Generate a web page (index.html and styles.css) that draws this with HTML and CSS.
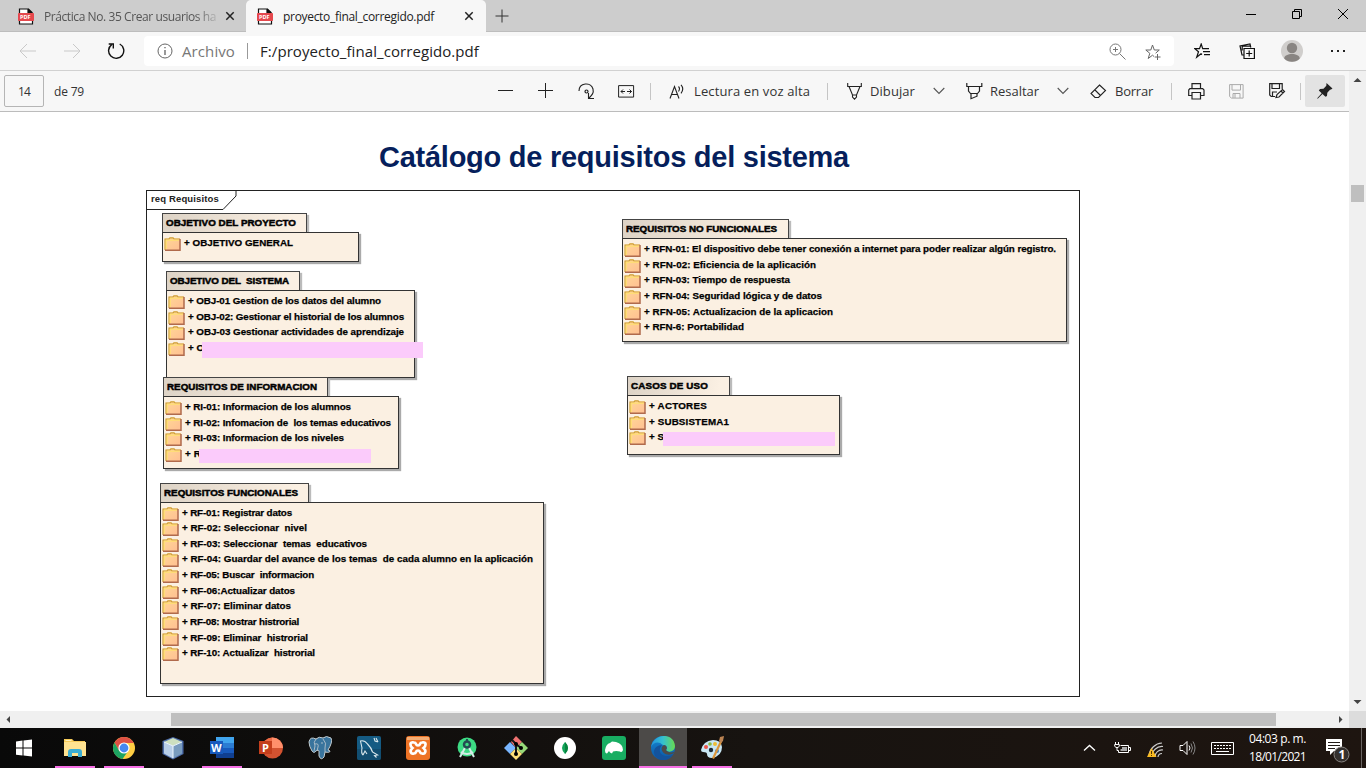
FILE: index.html
```html
<!DOCTYPE html>
<html lang="es">
<head>
<meta charset="utf-8">
<title>proyecto_final_corregido.pdf</title>
<link rel="stylesheet" href="styles.css">
</head>
<body>
<svg class="defs" aria-hidden="true">
  <defs>
    <linearGradient id="fg" x1="0" y1="0" x2="1" y2="1"><stop offset="0" stop-color="#ffd796"/><stop offset="1" stop-color="#ffbf92"/></linearGradient>
    <linearGradient id="eg" x1="0" y1="0" x2="1" y2="0"><stop offset="0" stop-color="#2293e0"/><stop offset=".5" stop-color="#35c0cf"/><stop offset="1" stop-color="#68db4f"/></linearGradient>
    <linearGradient id="eb" x1="0" y1="0" x2="0" y2="1"><stop offset="0" stop-color="#1587d4"/><stop offset="1" stop-color="#0c57a4"/></linearGradient>
  </defs>
  <symbol id="folder" viewBox="0 0 17 16"><path d="M1 14V2.500h3.500l1-1h4l1 1H16V14z" fill="url(#fg)"/><path d="M1 14V3h4l1-1.200h3L10 3h6" fill="none" stroke="#cda038" stroke-width="1.200"/><path d="M2.200 13V4.200H15" fill="none" stroke="#ffe46c"/><path d="M16 3v11.300H1" fill="none" stroke="#b06a4c" stroke-width="1.500"/></symbol>
  <symbol id="x" viewBox="0 0 10 10"><path d="m1.300 1.300 7.400 7.400m0-7.400-7.400 7.400" stroke="#222" stroke-width="1.500"/></symbol>
  <symbol id="chev" viewBox="0 0 12 8"><path d="m.7 1 5.300 5.400L11.300 1" fill="none" stroke="#555" stroke-width="1.100"/></symbol>
</svg>

<header class="tabs">
  <div class="tab idle"><svg class="pdf-icon" viewBox="0 0 16 17"><path d="M1.500 5V1h9l4 4M1.500 12v4h13v-4M10 1v4h4.500" fill="#fff" stroke="#111" stroke-width="1.200"/><path d="M10 .5 15 5.500h-5z" fill="#111"/><rect y="5" width="16" height="8" rx=".7" fill="#e5484d"/><text x="2" y="11.200" class="pdf-text">PDF</text></svg><span class="tab-title fade" data-w="172">Práctica No. 35 Crear usuarios ha</span><svg class="close"><use href="#x"/></svg></div>
  <div class="tab active"><svg class="pdf-icon" viewBox="0 0 16 17"><path d="M1.500 5V1h9l4 4M1.500 12v4h13v-4M10 1v4h4.500" fill="#fff" stroke="#111" stroke-width="1.200"/><path d="M10 .5 15 5.500h-5z" fill="#111"/><rect y="5" width="16" height="8" rx=".7" fill="#e5484d"/><text x="2" y="11.200" class="pdf-text">PDF</text></svg><span class="tab-title" data-w="151">proyecto_final_corregido.pdf</span><svg class="close"><use href="#x"/></svg></div>
  <svg class="new-tab" viewBox="0 0 14 14"><path d="M7 .5v13M.5 7h13" stroke="#333"/></svg>
  <div class="window-buttons">
    <svg width="12" height="12"><path d="M1 6.500h10" stroke="#000"/></svg>
    <svg width="12" height="12"><path d="M1.500 3.500h7v7h-7zM3.500 3V1.500h7v7H9" fill="none" stroke="#000"/></svg>
    <svg width="12" height="12"><path d="m1 1 10 10M11 1 1 11" stroke="#000"/></svg>
  </div>
</header>

<nav class="address-row">
  <svg class="nav-icon back" viewBox="0 0 18 16"><path d="M17 8H1.500M8 1 1 8l7 7" fill="none" stroke="#c9c9c9"/></svg>
  <svg class="nav-icon forward" viewBox="0 0 18 16"><path d="M1 8h15.500M10 1l7 7-7 7" fill="none" stroke="#c9c9c9"/></svg>
  <svg class="nav-icon reload" viewBox="0 0 18 18"><path d="M12.700 2A7.600 7.600 0 1 1 4.700 2.600M1.700 2h4.600v4.600" fill="none" stroke="#111" stroke-width="1.400"/></svg>
  <div class="address">
    <svg class="info" viewBox="0 0 16 16"><circle cx="8" cy="8" r="7" fill="none" stroke="#666"/><path d="M8 7v5M8 4v1.300" stroke="#555" stroke-width="1.200"/></svg>
    <span class="scheme" data-w="53">Archivo</span><i class="address-line"></i><span class="url" data-w="219">F:/proyecto_final_corregido.pdf</span>
    <svg class="zoom-icon" viewBox="0 0 17 17"><circle cx="6.500" cy="6.500" r="5.500" fill="none" stroke="#777"/><path d="m10.500 10.500 6 6M4 6.500h5M6.500 4v5" stroke="#777"/></svg>
    <svg class="star" viewBox="0 0 17 17"><path d="M9 12.500 7.500 11.200 3.200 14.500l1.600-5.200L.8 6h5L7.500 1l1.800 5h5l-3.700 3.200M12.500 10v6M9.700 13h5.800" fill="none" stroke="#666"/></svg>
  </div>
  <svg class="favorites" viewBox="0 0 17 16"><path d="m8 11.500-1-.8-4.300 3.500 1.800-5.400L.8 5.700h4.700L7.200 1l1.500 4.700H15M9 8.700h7M10 11.700h6" fill="none" stroke="#111" stroke-width="1.200"/></svg>
  <svg class="collections" viewBox="0 0 17 17"><path d="M5 5.500h10.400V15.500H5zM10.200 7.500v6M7.200 10.500h6M4.500 12H3L1 3l10-2 .8 3.500M3.200 7.500V3.200H11" fill="none" stroke="#111" stroke-width="1.200"/></svg>
  <svg class="avatar" viewBox="0 0 22 22"><circle cx="11" cy="11" r="11" fill="#d0cecc"/><circle cx="11" cy="8" r="5.200" fill="#898582"/><path d="M3.200 18.500c0-6 15.600-6 15.600 0a11 11 0 0 1-15.600 0" fill="#898582"/></svg>
  <svg class="dots" viewBox="0 0 16 4"><path d="M1 1h2v2H1zM7 1h2v2H7zM13 1h2v2h-2z" fill="#222"/></svg>
</nav>

<main class="viewer">
  <div class="document">
    <div class="toolbar">
      <div class="page-box"><span data-w="12">14</span></div><span class="page-total" data-w="30">de 79</span>
      <svg class="minus" width="16" height="16"><path d="M0 7.500h15" stroke="#222"/></svg>
      <svg class="plus" width="16" height="16"><path d="M0 7.500h15M7.500 0v15" stroke="#222"/></svg>
      <svg class="rotate" width="17" height="17"><path d="M1 8C1-.5 13-1.500 15 6c1 4-1 6-4 9M10.500 10v5.500H16" fill="none" stroke="#222" stroke-width="1.100"/><circle cx="8.500" cy="8.500" r="1.500" fill="none" stroke="#222" stroke-width="1.200"/></svg>
      <svg class="fit" width="17" height="13"><path d="M.6.600h15v11.500H.6zM3 6.500h4M9 6.500h4.500M5 4.500l-2 2 2 2M11.500 4.500l2 2-2 2" fill="none" stroke="#222"/></svg>
      <i class="sep s1"></i>
      <svg class="aloud" width="17" height="15"><path d="m1 14.500 4.500-12 4.500 12M2.800 10.500h5.500M9.500 2.500q2 2 0 5M12 .8q3.500 4 0 8.500" fill="none" stroke="#222" stroke-width="1.100"/></svg>
      <span data-w="116">Lectura en voz alta</span>
      <i class="sep s2"></i>
      <svg class="draw" width="15" height="17"><path d="M.7 0v3.500h13.600V0M2 3.500l3.500 8.500h4L13 3.500M5.500 12v2l2 2.200 2-2.200v-2" fill="none" stroke="#222" stroke-width="1.100"/></svg>
      <span data-w="45">Dibujar</span><svg class="chev c1"><use href="#chev"/></svg>
      <svg class="mark" width="17" height="17"><path d="M.8 0v3.500h15V0M2.500 3.500V8l2 2.500h7l2-2.500V3.500M5 10.500v5.200l6-2.500v-2.700" fill="none" stroke="#222" stroke-width="1.200"/></svg>
      <span data-w="49">Resaltar</span><svg class="chev c2"><use href="#chev"/></svg>
      <svg class="erase" width="17" height="15"><path d="m9.500 1 6 5.500-7 7H5l-4-4zM4.500 5.500l6 6" fill="none" stroke="#222" stroke-width="1.100"/></svg>
      <span data-w="38">Borrar</span>
      <i class="sep s3"></i>
      <svg class="print" width="17" height="17"><path d="M4 5.500V.600h8.500v4.900M4 12.500H.700V7l1.200-1.400h12.800L16 7v5.500h-3.500M4 9.500h8.500V16H4z" fill="none" stroke="#222" stroke-width="1.200"/></svg>
      <svg class="save" width="15" height="15"><path d="M.6.600h13.500v13.500H2.500L.6 12.500zM3 .6v5.500h8.500V.600M4 14V9.500h7V14M6 10v4" fill="none" stroke="#aaa"/></svg>
      <svg class="save-as" width="17" height="16"><path d="M6 13.500H2.200L.7 12V.700h12.500V6M3 .700v4.800h7.500V.700M3.500 13.500V9H8M7 14.500l1-3 5.500-5 2 2L10 14zM12 8l2 2" fill="none" stroke="#222" stroke-width="1.200"/></svg>
      <i class="sep s4"></i>
      <div class="pin"><svg width="16" height="16"><path d="m9.500 0 6 5.500-1.500 1-1 .2-2.700 3-.3 3.200-1.500.8-3-2.800L.700 15.700l-.500-.5L4.700 10.300 1.800 7.500l1.200-1.400 3.500-.3 2.800-3z" fill="#222"/></svg></div>
    </div>
    <div class="page">
      <h1 data-w="470">Catálogo de requisitos del sistema</h1>
      <section class="frame">
        <svg class="frame-tag" width="92" height="20"><path d="M0 18.500h76L89 5V0" fill="#fff" stroke="#222"/></svg>
        <span class="frame-name" data-w="68">req Requisitos</span>

        <article class="package p1"><h2><span data-w="130">OBJETIVO DEL PROYECTO</span></h2>
          <ul><li><svg><use href="#folder"/></svg><span data-w="109">+ OBJETIVO GENERAL</span></li></ul></article>

        <article class="package p2"><h2><span data-w="119">OBJETIVO DEL&nbsp; SISTEMA</span></h2>
          <ul><li><svg><use href="#folder"/></svg><span data-w="193">+ OBJ-01 Gestion de los datos del alumno</span></li>
          <li><svg><use href="#folder"/></svg><span data-w="216">+ OBJ-02: Gestionar el historial de los alumnos</span></li>
          <li><svg><use href="#folder"/></svg><span data-w="216">+ OBJ-03 Gestionar actividades de aprendizaje</span></li>
          <li><svg><use href="#folder"/></svg><span data-w="16">+ O</span></li></ul><i class="redaction"></i></article>

        <article class="package p3"><h2><span data-w="150">REQUISITOS DE INFORMACION</span></h2>
          <ul><li><svg><use href="#folder"/></svg><span data-w="166">+ RI-01: Informacion de los alumnos</span></li>
          <li><svg><use href="#folder"/></svg><span data-w="206">+ RI-02: Infomacion de&nbsp; los temas educativos</span></li>
          <li><svg><use href="#folder"/></svg><span data-w="159">+ RI-03: Informacion de los niveles</span></li>
          <li><svg><use href="#folder"/></svg><span data-w="16">+ R</span></li></ul><i class="redaction"></i></article>

        <article class="package p4"><h2><span data-w="134">REQUISITOS FUNCIONALES</span></h2>
          <ul><li><svg><use href="#folder"/></svg><span data-w="110">+ RF-01: Registrar datos</span></li>
          <li><svg><use href="#folder"/></svg><span data-w="125">+ RF-02: Seleccionar&nbsp; nivel</span></li>
          <li><svg><use href="#folder"/></svg><span data-w="185">+ RF-03: Seleccionar&nbsp; temas&nbsp; educativos</span></li>
          <li><svg><use href="#folder"/></svg><span data-w="351">+ RF-04: Guardar del avance de los temas&nbsp; de cada alumno en la aplicación</span></li>
          <li><svg><use href="#folder"/></svg><span data-w="132">+ RF-05: Buscar&nbsp; informacion</span></li>
          <li><svg><use href="#folder"/></svg><span data-w="113">+ RF-06:Actualizar datos</span></li>
          <li><svg><use href="#folder"/></svg><span data-w="109">+ RF-07: Eliminar datos</span></li>
          <li><svg><use href="#folder"/></svg><span data-w="117">+ RF-08: Mostrar histrorial</span></li>
          <li><svg><use href="#folder"/></svg><span data-w="126">+ RF-09: Eliminar&nbsp; histrorial</span></li>
          <li><svg><use href="#folder"/></svg><span data-w="133">+ RF-10: Actualizar&nbsp; histrorial</span></li></ul></article>

        <article class="package p5"><h2><span data-w="151">REQUISITOS NO FUNCIONALES</span></h2>
          <ul><li><svg><use href="#folder"/></svg><span data-w="412">+ RFN-01: El dispositivo debe tener conexión a internet para poder realizar algún registro.</span></li>
          <li><svg><use href="#folder"/></svg><span data-w="172">+ RFN-02: Eficiencia de la aplicación</span></li>
          <li><svg><use href="#folder"/></svg><span data-w="146">+ RFN-03: Tiempo de respuesta</span></li>
          <li><svg><use href="#folder"/></svg><span data-w="178">+ RFN-04: Seguridad lógica y de datos</span></li>
          <li><svg><use href="#folder"/></svg><span data-w="189">+ RFN-05: Actualizacion de la aplicacion</span></li>
          <li><svg><use href="#folder"/></svg><span data-w="100">+ RFN-6: Portabilidad</span></li></ul></article>

        <article class="package p6"><h2><span data-w="77">CASOS DE USO</span></h2>
          <ul><li><svg><use href="#folder"/></svg><span data-w="58">+ ACTORES</span></li>
          <li><svg><use href="#folder"/></svg><span data-w="80">+ SUBSISTEMA1</span></li>
          <li><svg><use href="#folder"/></svg><span data-w="15">+ S</span></li></ul><i class="redaction"></i></article>
      </section>
    </div>
    <div class="hscroll"><svg width="17" height="17"><path d="M10 5v7L6.500 8.500z" fill="#444"/></svg><i class="hthumb"></i><svg class="right-arrow" width="17" height="17"><path d="M7 5v7l3.500-3.500z" fill="#444"/></svg></div>
  </div>
  <div class="vscroll"><svg width="17" height="17"><path d="M4.500 11h8L8.500 7z" fill="#444"/></svg><i class="vthumb"></i><svg class="down-arrow" width="17" height="17"><path d="M4.500 6h8l-4 4z" fill="#444"/></svg><i class="corner"></i></div>
</main>

<footer class="taskbar">
  <div class="app start"><svg viewBox="0 0 24 24"><path d="M4 5.500 10.500 4.600V11.500H4zM11.500 4.500 20 3.500v8h-8.500zM4 12.500h6.500v7L4 18.700zM11.500 12.500H20v8l-8.500-1z" fill="#fff"/></svg></div>
  <div class="app open"><svg viewBox="0 0 24 24"><path d="M1 3h8l2 2h11v15H1z" fill="#f6cb59"/><path d="M1 6h22v14H1z" fill="#ffe391"/><path d="M5 21v-5q0-3 3-3h8q3 0 3 3v5h-4v-4H9v4z" fill="#3badd3"/><path d="M2.500 4.500h6" stroke="#fff2c0"/></svg></div>
  <div class="app open"><svg viewBox="0 0 24 24"><circle cx="12" cy="12" r="11" fill="#ffce43"/><path d="M2.500 6.500A11 11 0 0 1 21.500 6.500L22 7H12l-5 7.500z" fill="#de5145"/><path d="M2.500 6.500A11 11 0 0 0 10.500 23l6-8.500H7z" fill="#1da462"/><circle cx="12" cy="12" r="5.600" fill="#fff"/><circle cx="12" cy="12" r="4.400" fill="#4688f1"/></svg></div>
  <div class="app"><svg viewBox="0 0 24 24"><path d="M12 1 22.500 5v13L12 23.500 1.500 18V5z" fill="#4d6ca8"/><path d="m12 2 9 4-9 4-9-4z" fill="#cde0c0"/><path d="M3 6v11.500l9 5V10z" fill="#b9cfe8"/><path d="m21 6-9 4v12.500l9-5z" fill="#799cbe"/><path d="M3 6l9 4 9-4M12 10v12" fill="none" stroke="#edf6ff"/></svg></div>
  <div class="app open"><svg viewBox="0 0 24 24"><path d="M6 1h18v6H6z" fill="#41a5ee"/><path d="M6 7h18v5H6z" fill="#2b7cd3"/><path d="M6 12h18v5H6z" fill="#185abd"/><path d="M6 17h18v5H6z" fill="#103f91"/><path d="M0 5h13v13H0z" fill="#185abd"/><text x="1" y="15.500" class="office-letter">W</text></svg></div>
  <div class="app"><svg viewBox="0 0 24 24"><circle cx="13.500" cy="12" r="10.500" fill="#d35230"/><path d="M13 1.500V12h11A10.500 10.500 0 0 0 13 1.500" fill="#ff8f6b"/><path d="M3 12h10V1.500A10.500 10.500 0 0 0 3 12" fill="#ed6c47"/><path d="M0 5h13v13H0z" fill="#c43e1c"/><text x="3" y="15.500" class="office-letter">P</text></svg></div>
  <div class="app"><svg viewBox="0 0 24 24"><path d="M8 3Q2 0 1 6q0 4 3 9 2 3 4 0c1-1 3-1 3 0v5q2 5 5 1l1-5q5 1 5-1l-2-1q5-8 3-12-5-3-8 0-4-2-7 1" fill="#39749d" stroke="#c4ccd0"/><path d="M8 3Q5 6 7 10l-1 5M15 3q4 4 2 9v4M7 8q4-1 3 3l-1 4M13 7h2" fill="none" stroke="#c4ccd0" stroke-width=".8"/></svg></div>
  <div class="app"><svg viewBox="0 0 24 24"><rect width="24" height="24" rx="2" fill="#155b83"/><path d="M0 13h24v9q0 2-2 2H2q-2 0-2-2z" fill="#104666" opacity=".6"/><path d="M6 19Q4 17 5 12L3.500 5q4-1 7 3 4 4 5 8l5 3-3 .5 2 2M6 19l2-4 2 3M17 2l1 3 3 1M19 2l2 4" fill="none" stroke="#dce9ed" stroke-width="1.100"/></svg></div>
  <div class="app"><svg viewBox="0 0 24 24"><rect width="24" height="24" rx="3" fill="#ee7325"/><path d="M1 1h22v3H1z" fill="#f3ad75"/><path d="M8 6.500C3 5.500 4 10 6.500 12 3 15 5 18.500 8 17.500c3 0 1-3 4-3s1 3 4 3c3 1 5-2.500 1.500-5.500C20 10 21 5.500 16 6.500c-3 0-1 3-4 3s-1-3-4-3z" fill="none" stroke="#fff" stroke-width="2.700"/></svg></div>
  <div class="app"><svg viewBox="0 0 24 24"><circle cx="12" cy="11" r="9.500" fill="#3ddc84"/><path d="M11 10 5 21M13 10l6 11M6 16q6 4 12 0" fill="none" stroke="#d6ece7" stroke-width="2"/><circle cx="12" cy="8.500" r="3" fill="#3ddc84" stroke="#244b53" stroke-width="2.500"/><path d="M12 3v3" stroke="#244b53" stroke-width="2"/></svg></div>
  <div class="app"><svg viewBox="0 0 24 24"><path d="m12 0 6 6-6 6-5-6z" fill="#f07371"/><path d="m6 6 6 6-6 6-6-6z" fill="#79b6ff"/><path d="m18 6 6 6-6 6-6-6z" fill="#98d979"/><path d="m12 12 6 6-6 6-6-6z" fill="#ffe077"/><path d="m8 4 4 4v10M12 8l5 4" fill="none" stroke="#171717" stroke-width="2"/><circle cx="12" cy="8" r="2"/><circle cx="17" cy="12" r="2"/><circle cx="12" cy="18" r="2"/></svg></div>
  <div class="app"><svg viewBox="0 0 24 24"><circle cx="12" cy="12" r="11" fill="#fff"/><path d="M12 6q6 6 0 12-6-6 0-12" fill="#13a45b"/><path d="M12 6q6 6 0 12z" fill="#07843e"/></svg></div>
  <div class="app"><svg viewBox="0 0 24 24"><rect width="24" height="24" rx="3" fill="#18ad62"/><path d="M3 14q1-6 5-7l2-1.500 4 .5q7 2 7 8-1 3-3 1.500-4-1-7 0l-1 2-2-1-1-1.500-2 2.500q-2 0-2-3.500" fill="#fff"/></svg></div>
  <div class="app open selected"><svg viewBox="0 0 24 24"><circle cx="12" cy="12" r="12" fill="url(#eb)"/><path d="M0 11C3-3 23-4 24 10c0 6-7 7-9 4 2-2 1-5-3-5C7 4 2 7 0 11" fill="url(#eg)"/><path d="M11 9c-5 6-1 12 6 11 2 0 4-1 5-2-3 7-12 8-17 3-5-6 0-12 6-12" fill="#14539c"/><path d="M13 9c-4 2-3 8 3 9.500 3 .5 6-.5 7-1.500v-1c-3 1-7 0-8-2 2-2 0-5-2-5" fill="#4c4b49"/></svg></div>
  <div class="app open"><svg viewBox="0 0 24 24"><path d="M1 14Q3 5 13 4q8 0 9 7 0 9-10 11-5 0-5-4 0-2-4-2-2 0-2-2" fill="#c9e7f4"/><circle cx="6" cy="11" r="2" fill="#ee5548"/><circle cx="10" cy="8" r="1.800" fill="#89b944"/><circle cx="15" cy="8" r="2" fill="#efbd34"/><circle cx="11" cy="14" r="2.200" fill="#1c2935"/><circle cx="17" cy="15" r="2" fill="#4183c4"/><path d="m12 22 8-17 2 1-8 17z" fill="#dc963b"/><path d="m19 5 1-4 4-1-1 5-2 2z" fill="#bc8453"/></svg></div>
  <div class="tray">
    <svg class="up" width="13" height="8"><path d="m1 6.500 5.500-5L12 6.500" fill="none" stroke="#fff" stroke-width="1.300"/></svg>
    <svg class="battery" width="17" height="13"><path d="M6.500 3.500h8v7h-10V8.500M15 5.500h1.500v3H15M1.500 0v2M4.500 0v2M3 5v3.500h1.500" fill="none" stroke="#fff"/><path d="M8 5h5v4H6.500V7H8z" fill="#aaa"/><path d="M.7 2.500h4.600V4L4.200 5.500H1.800L.7 4z" fill="none" stroke="#fff"/></svg>
    <svg class="wifi" width="17" height="16"><path d="M5 15A10 10 0 0 1 16 4.500M8 15A7 7 0 0 1 16 8M11 15a4 4 0 0 1 4-3.500M2 13A14 14 0 0 1 15 1" fill="none" stroke="#ccc" stroke-width="1.200"/><path d="m4.500 6 5 9H0z" fill="#f9bb22"/><path d="M4.500 9v3M4.500 13v1" stroke="#553600"/></svg>
    <svg class="sound" width="17" height="14"><path d="M1 4.500h3l4-4v13l-4-4H1zM10 4.500q2 2.500 0 5" fill="none" stroke="#fff"/><path d="M12 2.500q3 4.500 0 9M14 .500q4 6.500 0 13" fill="none" stroke="#888"/></svg>
    <svg class="keyboard" width="23" height="13"><path d="M.5.500h22v12H.5z" fill="none" stroke="#fff"/><path d="M3 3.500h17M3 6.500h17" stroke="#fff" stroke-dasharray="2 1"/><path d="M5 9.500h13" stroke="#fff"/></svg>
    <div class="clock"><span data-w="57">04:03 p. m.</span><span data-w="57">18/01/2021</span></div>
    <svg class="notice" width="25" height="27"><path d="M1 2h16v12H9l-4 4v-4H1z" fill="#fff"/><path d="M3 5.500h12M3 8.500h12M3 11.500h7" stroke="#211b18"/><circle cx="16.500" cy="17.500" r="7.500" fill="#34302e" stroke="#878380"/><text x="13.500" y="22" class="badge-number">1</text></svg>
    <i class="desktop-edge"></i>
  </div>
</footer>
<script src="script.js"></script>
</body>
</html>
```
FILE: styles.css
```css
* { box-sizing: border-box; }
body { margin: 0; width: 1366px; height: 768px; overflow: hidden; display: flex; flex-direction: column; font-family: "Open Sans", sans-serif; background: #fff; color: #222; }
svg { display: block; flex: none; }
i { display: block; flex: none; }
.defs { position: absolute; width: 0; height: 0; }
[data-w] { display: block; white-space: pre; flex: none; }

.tabs { height: 32px; flex: none; display: flex; background: #cdcdcd; border-bottom: 1px solid #bdbdbd; }
.tab { height: 32px; display: flex; align-items: center; font-size: 12px; }
.tab.idle { width: 246px; padding-left: 18px; color: #555; }
.tab.active { width: 240px; padding-left: 11px; background: #f7f7f7; color: #222; border-radius: 5px 5px 0 0; }
.pdf-icon { width: 16px; height: 17px; margin-right: 10px; }
.pdf-text { font: bold 5.5px "Open Sans", sans-serif; fill: #fff; }
.tab-title { width: 172px; }
.active .tab-title { width: 176px; }
.fade { -webkit-mask-image: linear-gradient(90deg, #000 88%, rgba(0, 0, 0, .2)); mask-image: linear-gradient(90deg, #000 88%, rgba(0, 0, 0, .2)); }
.close { width: 10px; height: 10px; margin-left: 9px; }
.active .close { margin-left: 5px; }
.new-tab { width: 14px; height: 14px; margin: 9px 0 0 9px; }
.window-buttons { margin-left: auto; display: flex; gap: 34px; padding: 8px 17px 0 0; }

.address-row { height: 39px; flex: none; display: flex; align-items: center; background: #f7f7f7; border-bottom: 1px solid #d1d1d1; }
.nav-icon { width: 18px; height: 16px; }
.back { margin-left: 19px; }
.forward { margin-left: 26px; }
.reload { height: 18px; margin-left: 26px; }
.address { width: 1030px; height: 30px; margin-left: 19px; background: #fff; border-radius: 4px; display: flex; align-items: center; font-size: 15px; }
.info { width: 16px; height: 16px; margin-left: 13px; }
.scheme { width: 54px; margin-left: 9px; color: #777; }
.address-line { width: 1px; height: 16px; background: #999; margin-left: 11px; }
.url { margin-left: 12px; }
.zoom-icon { width: 17px; height: 17px; margin-left: auto; }
.star { width: 17px; height: 17px; margin: 2px 12px 0 19px; }
.favorites { width: 17px; height: 16px; margin-left: 20px; }
.collections { width: 17px; height: 17px; margin-left: 28px; }
.avatar { width: 22px; height: 22px; margin-left: 25px; }
.dots { width: 16px; height: 4px; margin-left: 27px; }

.viewer { height: 657px; flex: none; display: flex; }
.document { width: 1349px; display: flex; flex-direction: column; }
.toolbar { height: 41px; flex: none; background: #f7f7f7; border-bottom: 1px solid #bcbcbc; display: flex; align-items: center; font-size: 13px; color: #333; }
.page-box { width: 40px; height: 32px; border: 1px solid #b5b5b5; border-radius: 2px; margin-left: 4px; padding-left: 13px; display: flex; align-items: center; font-size: 12px; }
.page-total { width: 31px; margin-left: 10px; font-size: 12px; }
.minus { margin-left: 413px; }
.plus { margin-left: 24px; }
.rotate { margin-left: 24px; }
.fit { margin-left: 23px; }
.sep { width: 1px; height: 17px; background: #c5c5c5; }
.s1 { margin-left: 15px; }
.aloud { margin: 0 8px 0 18px; }
.s2 { margin-left: 17px; }
.draw { margin: 0 8px 0 19px; }
.chev { width: 12px; height: 8px; }
.c1 { margin-left: 18px; }
.mark { margin: 0 7px 0 21px; }
.c2 { margin-left: 18px; }
.erase { margin: 0 8px 0 21px; }
.s3 { margin-left: 18px; }
.print { margin-left: 16px; }
.save { margin-left: 24px; }
.save-as { margin-left: 25px; }
.s4 { margin-left: 14px; }
.pin { width: 40px; height: 32px; margin-left: 4px; background: #e3e3e3; border-radius: 2px; padding: 8px 12px; }

.page { height: 599px; flex: none; background: #fff; padding: 26px 0 0 146px; }
.page h1 { margin: 0 0 0 233px; height: 52px; font: bold 29px/39px "Liberation Sans", Arial, sans-serif; color: #061f5c; }
.frame { position: relative; width: 934px; height: 507px; border: 1px solid #222; font-family: "Liberation Sans", Arial, sans-serif; }
.frame-tag { position: absolute; left: 0; top: 0; }
.frame-name { position: absolute; left: 4px; top: 2px; font-size: 9.5px; line-height: 12px; font-weight: bold; }
.package { position: absolute; color: #000; font-weight: bold; font-size: 9.8px; display: flex; flex-direction: column; }
.package h2 { margin: 0; height: 20px; border: 1px solid #444; background: linear-gradient(100deg, #ddd3c6, #fbf0e3 90%); font-size: 9.8px; line-height: 17px; padding-left: 3px; box-shadow: 2px 2px 1px #bbb; -webkit-text-stroke: .5px #000; }
.package ul { list-style: none; margin: -1px 0 0; padding: 3px 0 0 1px; flex: 1; border: 1px solid #333; background: #fbf0e2; box-shadow: 2px 2px 1px #aaa; position: relative; }
.package li { height: 15.65px; display: flex; line-height: 14px; -webkit-text-stroke: .25px #000; }
.package li svg { width: 17px; height: 16px; margin: 0 3px 0 0; }
.p1 { left: 15px; top: 22px; width: 197px; height: 49px; }
.p1 h2 { width: 145px; }
.p2 { left: 19px; top: 80px; width: 249px; height: 107px; }
.p2 h2 { width: 134px; }
.p3 { left: 16px; top: 186px; width: 236px; height: 92px; }
.p3 h2 { width: 165px; }
.p4 { left: 13px; top: 291.500px; width: 384px; height: 201px; }
.p4 h2 { width: 149px; }
.p5 { left: 475px; top: 28px; width: 445px; height: 123px; }
.p5 h2 { width: 167px; }
.p6 { left: 480px; top: 185px; width: 213px; height: 79px; }
.p6 h2 { width: 103px; }
.redaction { position: absolute; background: #fbcbfb; }
.p2 .redaction { left: 36px; top: 71px; width: 221px; height: 16px; }
.p3 .redaction { left: 36px; top: 72px; width: 172px; height: 14px; }
.p6 .redaction { left: 36px; top: 56px; width: 172px; height: 14px; }

.hscroll { height: 17px; flex: none; background: #f0f0f0; display: flex; align-items: center; }
.hthumb { width: 1105px; height: 13px; margin-left: 154px; background: #bfbfbf; }
.right-arrow { margin-left: auto; }
.vscroll { width: 17px; background: #f0f0f0; display: flex; flex-direction: column; align-items: center; }
.vthumb { width: 13px; height: 17px; margin-top: 97px; background: #bfbfbf; }
.down-arrow { margin-top: auto; }
.corner { width: 17px; height: 17px; background: #dcdcdc; }

.taskbar { height: 40px; flex: none; display: flex; background: linear-gradient(90deg, #090909, #171310 55%, #1e1510); color: #fff; }
.app { width: 49px; height: 40px; display: flex; flex-direction: column; align-items: center; padding-top: 8px; }
.app svg { width: 24px; height: 24px; }
.start { width: 50px; padding-right: 2px; }
.open::after { content: ""; width: 40px; height: 2px; margin-top: 6px; background: #f66fe5; flex: none; }
.selected { width: 48px; margin-left: 1px; background: #4c4a48; }
.selected::after { width: 48px; }
.office-letter { font: bold 11px "Open Sans", sans-serif; fill: #fff; }
.tray { display: flex; align-items: center; margin-left: auto; }
.up { margin-right: 1px; }
.battery { margin-left: 17px; }
.wifi { margin: 3px 0 0 16px; }
.sound { margin-left: 15px; }
.keyboard { margin-left: 15px; }
.clock { width: 58px; margin-left: 15px; font-size: 12px; line-height: 18px; padding-bottom: 1px; }
.notice { margin: 5px 0 0 18px; }
.badge-number { font: bold 12px "Open Sans", sans-serif; fill: #fff; }
.desktop-edge { width: 1px; height: 40px; margin: 0 4px 0 11px; background: #696461; }
```
FILE: script.js
```js
// Track each label so that its text fills the width given in data-w.
document.querySelectorAll('[data-w]').forEach(function (el) {
  var range = document.createRange();
  range.selectNodeContents(el);
  var natural = range.getBoundingClientRect().width;
  el.style.letterSpacing = (Number(el.dataset.w) - natural) / el.textContent.length + 'px';
});
```
